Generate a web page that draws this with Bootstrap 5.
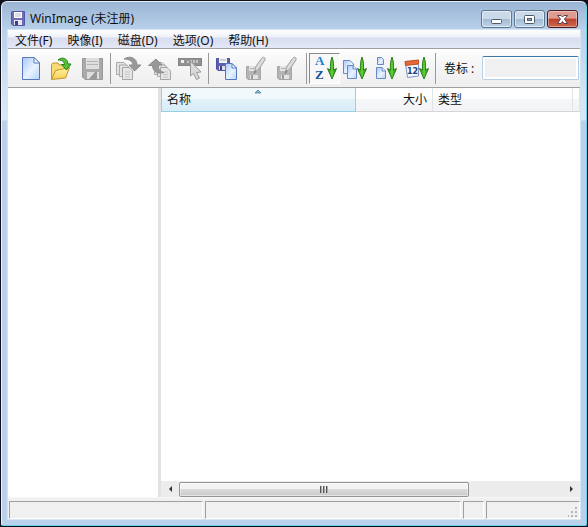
<!DOCTYPE html>
<html lang="zh-CN">
<head>
<meta charset="utf-8">
<meta name="viewport" content="width=device-width, initial-scale=1">
<title>WinImage (未注册)</title>
<link href="https://cdn.jsdelivr.net/npm/bootstrap@5.3.0/dist/css/bootstrap.min.css" rel="stylesheet">
<style>
body{background:#10101a;font-family:"Noto Sans","Noto Sans CJK SC",sans-serif;font-size:12px;line-height:16px;color:#111}
.app-window{margin:1px;padding:0 6px 6px;border:1px solid #62d2ea;border-top-color:#e4edf5;border-left-color:#eaf4fb;border-radius:6px 6px 2px 2px;background:linear-gradient(#9ab5d3 0,#a9c3e0 14px,#b9d1ea 28px,#d4e3f3 90px,#d9e7f6 118px,#b9d1ea 119px)}
.title-bar{height:28px;padding:0 2px 0 3px}
.title-text{font-size:12px;margin:5px 0 0 5px}
.caption-btn{width:31px;height:18px;padding:0;border:1px solid #5f7691;border-radius:3px;background:linear-gradient(#c9d9ea 48%,#a2bad4 50%,#bdd3e9);box-shadow:inset 0 0 0 1px #ffffff90;line-height:0}
.caption-btn svg{display:block;margin:auto}
.caption-close{border-color:#4c1c20;background:linear-gradient(#dd9c90 45%,#b9402e 50%,#cf6a4c);box-shadow:inset 0 0 0 1px #ffffff60}
.caption-group{gap:2px;margin-top:6px}
.client{background:#f0f0f0;box-shadow:0 0 0 1px #d6e5f4}
.menu-bar{height:18px;gap:1px;background:linear-gradient(#fff 0,#eef1f9 7px,#d8ddf0 8px,#e3e7f6)}
.menu-bar button{padding:2px 7px 0;border:0;background:none;color:#111;line-height:18px}
.tool-bar{height:40px;border-top:1px solid #a0a0a0;border-bottom:1px solid #a0a0a0;padding-left:7px;background:linear-gradient(#fff,#f7f7f7 30%,#eee);box-shadow:inset 0 1px #fff}
.tool-btn{width:31px;height:31px;padding:1px 0 0;border:1px solid transparent;background:none;flex:none}
.tool-btn svg{display:block;margin:auto}
.tool-btn.pressed{border-color:#8b8b8b #fff #fff #8b8b8b;background:#f8f8f8}
.sort-letter{font-family:"Liberation Serif",serif;font-weight:700;font-size:13px}
.sort-date{font-family:"DejaVu Sans",sans-serif;font-weight:700;font-size:8px}
.tool-sep{width:1px;height:31px;margin:0 2px;background:#999;flex:none}
.volume-label{margin:2px 8px 0 6px;white-space:nowrap}
.volume-input{height:24px;min-width:0;padding:2px;border:1px solid #b5cfe7;border-top-color:#3d7bad;border-radius:2px;background:#f0f0f0;box-shadow:inset 0 0 0 2px #fff;margin-right:1px}
.tree-pane{flex:0 0 150px;background:#fff}
.splitter{width:3px;background:#e2e2e2;flex:none}
.files-table{table-layout:fixed;width:100%}
.files-table th{height:23px;padding:2px 5px 0;font-weight:400;background:linear-gradient(#fff 45%,#f5f6f8 50%,#f1f3f6);border-right:1px solid #e0e4e9;border-bottom:1px solid #d5d5d5;overflow:hidden;white-space:nowrap}
.files-table th.sorted{background:linear-gradient(#f2f9fc 45%,#e1f1f9 50%,#d8ecf6);border:1px solid #96d0e6;border-width:0 1px 1px}
.col-name{width:194px}.col-size{width:77px}.col-type{width:140px}
.sort-mark{left:50%;top:1px;margin-left:-5px;line-height:0}
.scroll-bar{height:16px;background:#ececec}
.scroll-bar button{width:18px;height:16px;padding:0;border:0;background:none;line-height:0}
.scroll-thumb{flex:0 1 290px;height:15px;border:1px solid #959595;border-radius:2px;background:linear-gradient(#f3f3f3 45%,#dadada 50%,#c9c9c9);box-shadow:inset 0 0 0 1px #ffffff80}
.grip-set{gap:1px}
.grip-line{width:2px;height:7px;background:linear-gradient(90deg,#555 50%,#aaa 50%)}
.status-bar{height:22px;padding-top:3px;gap:2px;border-top:1px solid #f8f8f8}
.status-cell{border:1px solid #a0a0a0;border-right-color:#fff;border-bottom-color:#fff;background:#f0f0f0}
.status-a{flex:0 0 194px;margin-left:1px}.status-c{flex:0 0 21px}.status-d{flex:0 0 94px}
</style>
<script src="https://cdn.jsdelivr.net/npm/bootstrap@5.3.0/dist/js/bootstrap.bundle.min.js"></script>
</head>
<body class="vh-100 d-flex flex-column overflow-hidden">
<svg width="0" height="0" class="position-absolute" aria-hidden="true">
<defs>
<linearGradient id="gPage" x1="0" y1="0" x2="1" y2="1"><stop offset="0" stop-color="#a9c8fa"/><stop offset=".55" stop-color="#e9f3ff"/><stop offset="1" stop-color="#b4d3fa"/></linearGradient>
<linearGradient id="gFolder" x1="0" y1="0" x2="0" y2="1"><stop offset="0" stop-color="#fff3a8"/><stop offset="1" stop-color="#f6cf52"/></linearGradient>
<linearGradient id="gArrow" x1="0" y1="0" x2="1" y2="0"><stop offset="0" stop-color="#2d8a16"/><stop offset=".5" stop-color="#5ed335"/><stop offset="1" stop-color="#247b10"/></linearGradient>
<g id="downArrow"><path d="M21 2C22.500 6 22.800 10 22.500 15L25.500 13.500L21 24L16.500 13.500L19.500 15C19.200 10 19.500 6 21 2Z" fill="url(#gArrow)" stroke="#217312" stroke-width=".9"/></g>
<g id="pen"><path d="M11.500 17L12.500 12L18.500 3.500C20 1.300 23 2.500 22 5L16 14Z" fill="#dadada" stroke="#a0a0a0"/><path d="M11 18.500L13 15.500" stroke="#888" stroke-width="1.500"/></g>
<g id="grayDisk"><path d="M3.500 11.500H17.500V24.500H5L3.500 23Z" fill="#b4b4b4" stroke="#a6a6a6"/><path d="M6 11H15V16H6Z" fill="#e3e3e3"/><path d="M7 13.500H12" stroke="#b5b5b5"/><path d="M7 20H15V24H7Z" fill="#e4e4e4"/><path d="M8 20H10V24H8Z" fill="#999"/></g>
<g id="grayPages"><path d="M1.500 8.500H9L12.500 12V20.500H1.500Z" fill="#e2e2e2" stroke="#aaa"/><path d="M4.500 11H12L14.500 14V22.500H4.500Z" fill="#e2e2e2" stroke="#aaa"/><path d="M7.500 13.500H14L17.500 17V25.500H7.500Z" fill="#e6e6e6" stroke="#a5a5a5"/><path d="M10 18H15M10 20.500H15M10 23H15" stroke="#c5c5c5"/></g>
</defs>
</svg>
<main class="app-window d-flex flex-column flex-grow-1">
<header class="title-bar d-flex align-items-center">
<svg width="14" height="15" viewBox="0 0 14 15" class="mt-1"><path d="M.5 1.500Q.5.500 1.500.500H13.500V14.500H2L.5 13Z" fill="#6f6dba" stroke="#5855a5"/><path d="M3 1H11V7H3Z" fill="#fff"/><path d="M4 3H10M4 5H10" stroke="#bcbcd2"/><path d="M3 9H11V14H3Z" fill="#e7e7ef"/><path d="M4 10H7V14H4Z" fill="#403d83"/></svg>
<span class="title-text flex-grow-1">WinImage (未注册)</span>
<div class="caption-group d-flex">
<button class="caption-btn" aria-label="最小化"><svg width="29" height="16" viewBox="0 0 29 16"><rect x="9.500" y="8.500" width="10" height="4" rx="1" fill="#fff" stroke="#4c5969"/></svg></button>
<button class="caption-btn" aria-label="最大化"><svg width="29" height="16" viewBox="0 0 29 16"><rect x="9.500" y="4.500" width="10" height="8" rx="1" fill="#fff" stroke="#4c5969"/><rect x="12.500" y="7.500" width="4" height="2" fill="#8ba9c8" stroke="#4c5969"/></svg></button>
<button class="caption-btn caption-close" aria-label="关闭"><svg width="29" height="16" viewBox="0 0 29 16"><path d="M9.500 4.500H13L14.500 6L16 4.500H19.500L16.500 8L19.500 12.500H16L14.500 10.500L13 12.500H9.500L12.500 8Z" fill="#fff" stroke="#5c4048"/></svg></button>
</div>
</header>
<section class="client d-flex flex-column flex-grow-1">
<nav class="menu-bar d-flex flex-shrink-0" aria-label="菜单"><button>文件(F)</button><button>映像(I)</button><button>磁盘(D)</button><button>选项(O)</button><button>帮助(H)</button></nav>
<div class="tool-bar d-flex align-items-center flex-shrink-0" role="toolbar" aria-label="工具栏">
<button class="tool-btn" aria-label="新建"><svg width="29" height="28" viewBox="0 0 29 28"><path d="M6.500 2.500H18L23.500 8V24.500H6.500Z" fill="url(#gPage)" stroke="#5579c0"/><path d="M18 2.500V8H23.500Z" fill="#fff" stroke="#5579c0"/></svg></button>
<button class="tool-btn" aria-label="打开"><svg width="29" height="28" viewBox="0 0 29 28"><path d="M4.500 24V9.500L6 8H11L12.500 10H18V14" fill="#f8dc76" stroke="#c39524"/><path d="M4.500 24.500L8.500 15.500L22.500 12.500L18.500 23Z" fill="url(#gFolder)" stroke="#c39524"/><path d="M11 5C15 1.500 20.500 3 21 9H24L19.500 15L14.500 9.500H17.500C17 6 14.500 5 11 5Z" fill="#54c235" stroke="#23811a"/></svg></button>
<button class="tool-btn" aria-label="保存"><svg width="29" height="28" viewBox="0 0 29 28"><path d="M4.500 3.500H24.500V24.500H7L4.500 22Z" fill="#aaa" stroke="#999"/><path d="M8 3H21V14H8Z" fill="#dedede"/><path d="M9 6.500H20M9 9.500H20" stroke="#b5b5b5"/><path d="M9 17H21V24H9Z" fill="#ddd"/><path d="M11 24L17 17H19V24Z" fill="#999"/></svg></button>
<span class="tool-sep"></span>
<button class="tool-btn" aria-label="提取"><svg width="29" height="28" viewBox="0 0 29 28"><g transform="translate(1 -1)"><use href="#grayPages"/><path d="M9 5C15 1 22 4 22 11H26L19.500 17L14 11H18C17.500 7 14 5 9 5Z" fill="#989898" stroke="#8d8d8d"/></g></svg></button>
<button class="tool-btn" aria-label="添加"><svg width="29" height="28" viewBox="0 0 29 28"><g transform="translate(8 -1)"><use href="#grayPages"/></g><path d="M11 4L17 10H13.500C13 14 14.500 16 19 17.500C12 19.500 7.500 16 7.500 10.500H3.500Z" fill="#989898" stroke="#8d8d8d"/></svg></button>
<button class="tool-btn" aria-label="编辑卷标"><svg width="29" height="28" viewBox="0 0 29 28"><rect x="2.500" y="3.500" width="23" height="7" fill="#929292" stroke="#858585"/><path d="M5 5H8V8H5Z" fill="#eee"/><path d="M12 6V8M15 5V8M18 5V8M21 5V8" stroke="#d4d4d4" stroke-width="1.500"/><path d="M14.500 6L25 17L20.500 17.500L23.500 23L20.500 24.500L17.500 18.500L14.500 21Z" fill="#d9d9d9" stroke="#999"/></svg></button>
<span class="tool-sep"></span>
<button class="tool-btn" aria-label="另存副本"><svg width="29" height="28" viewBox="0 0 29 28"><path d="M4.500 3.500H17.500V15.500H6L4.500 14Z" fill="#5b5fae" stroke="#4d529c"/><path d="M7 3H15V8H7Z" fill="#f2f2fb"/><path d="M8 5H14" stroke="#aaa"/><path d="M7 11H14V15H7Z" fill="#dedee9"/><path d="M8 11H10V15H8Z" fill="#403f81"/><path d="M13.500 8.500H20L24.500 13V24.500H13.500Z" fill="url(#gPage)" stroke="#5579c0"/><path d="M20 8.500V13H24.500Z" fill="#fff" stroke="#5579c0"/></svg></button>
<button class="tool-btn" aria-label="写入磁盘"><svg width="29" height="28" viewBox="0 0 29 28"><use href="#grayDisk"/><use href="#pen"/></svg></button>
<button class="tool-btn" aria-label="格式化写入"><svg width="29" height="28" viewBox="0 0 29 28"><use href="#grayDisk"/><use href="#pen"/></svg></button>
<span class="tool-sep"></span>
<button class="tool-btn pressed" aria-label="按名称排序" aria-pressed="true"><svg width="29" height="28" viewBox="0 0 29 28"><text class="sort-letter" x="5" y="10" fill="#1b7fd0">A</text><text class="sort-letter" x="5" y="24" fill="#17529b">Z</text><use href="#downArrow" x="1"/></svg></button>
<button class="tool-btn" aria-label="按类型排序"><svg width="29" height="28" viewBox="0 0 29 28"><g fill="url(#gPage)" stroke="#6988c3"><path d="M2.500 5.500H9L12.500 9V18.500H2.500Z"/><path d="M6.500 10.500H12L15.500 14V23.500H6.500Z"/><path d="M12 10.500V14H15.500"/></g><use href="#downArrow"/></svg></button>
<button class="tool-btn" aria-label="按大小排序"><svg width="29" height="28" viewBox="0 0 29 28"><g fill="url(#gPage)" stroke="#6988c3"><path d="M5.500 2.500H9.500L11.500 4.500V9.500H5.500Z"/><path d="M4.500 12.500H10L13.500 16V23.500H4.500Z"/><path d="M10 12.500V16H13.500"/></g><use href="#downArrow" x="-1"/></svg></button>
<button class="tool-btn" aria-label="按日期排序"><svg width="29" height="28" viewBox="0 0 29 28"><path d="M2.500 8L15.500 6.500V21L4.500 22.500Z" fill="#f5faff" stroke="#7893c4"/><path d="M2 6.500L15.500 5V9L2.500 10.500Z" fill="#e66a37" stroke="#bd4d22"/><text class="sort-date" x="4" y="19" fill="#263e70">12</text><use href="#downArrow"/></svg></button>
<span class="tool-sep"></span>
<label class="volume-label" for="volume">卷标 :</label><input id="volume" class="volume-input flex-grow-1" type="text" disabled>
</div>
<div class="d-flex flex-grow-1 bg-white overflow-hidden">
<aside class="tree-pane" aria-label="目录"></aside><div class="splitter"></div>
<section class="d-flex flex-column flex-grow-1 overflow-hidden">
<div class="flex-grow-1 overflow-hidden">
<table class="files-table"><thead><tr><th class="sorted col-name position-relative" scope="col">名称<span class="sort-mark position-absolute"><svg width="8" height="5" viewBox="0 0 8 5"><path d="M1 4L4 1L7 4Z" fill="#86b9d2" stroke="#3f718d" stroke-width=".7"/></svg></span></th><th class="col-size text-end" scope="col">大小</th><th class="col-type" scope="col">类型</th><th scope="col"></th></tr></thead></table>
</div>
<div class="scroll-bar d-flex align-items-center flex-shrink-0"><button aria-label="向左滚动"><svg width="5" height="8" viewBox="0 0 5 8"><path d="M4 1V7L1 4Z" fill="#333"/></svg></button><div class="scroll-thumb d-flex align-items-center justify-content-center"><div class="grip-set d-flex"><i class="grip-line"></i><i class="grip-line"></i><i class="grip-line"></i></div></div><button class="ms-auto" aria-label="向右滚动"><svg width="5" height="8" viewBox="0 0 5 8"><path d="M1 1V7L4 4Z" fill="#333"/></svg></button></div>
</section>
</div>
<footer class="status-bar d-flex flex-shrink-0"><div class="status-cell status-a"></div><div class="status-cell flex-grow-1"></div><div class="status-cell status-c"></div><div class="status-cell status-d d-flex justify-content-end align-items-end"><svg width="11" height="11" viewBox="0 0 11 11" fill="#b8b8b8"><path d="M7 0H9V2H7ZM7 4H9V6H7ZM3 4H5V6H3ZM7 8H9V10H7ZM3 8H5V10H3ZM0 8H1V10H0Z"/></svg></div></footer>
</section>
</main>
</body>
</html>
